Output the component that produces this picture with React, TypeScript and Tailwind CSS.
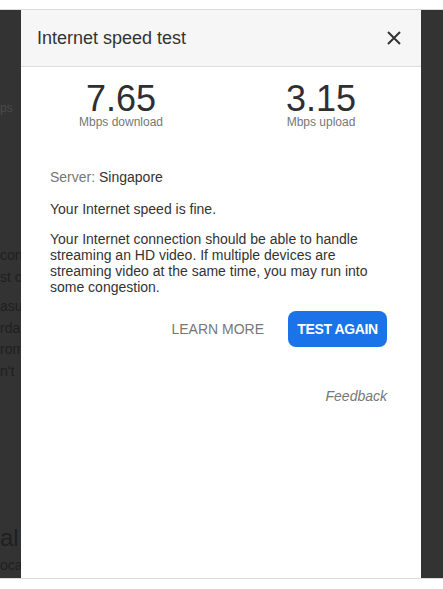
// Internet speed test dialog over a dimmed page.

import React from 'react'

const BG_LINES: { text: string; className: string }[] = [
  { text: 'ps', className: 'mt-[90px] text-[12px] leading-[16px] text-[#4a4a4a]' },
  { text: 'con', className: 'mt-[128px] text-[14px] leading-[22px]' },
  { text: 'st c', className: 'text-[14px] leading-[22px]' },
  { text: 'asu', className: 'mt-[8px] text-[14px] leading-[21.5px]' },
  { text: 'rda', className: 'text-[14px] leading-[21.5px]' },
  { text: 'rom', className: 'text-[14px] leading-[21.5px]' },
  { text: "n't", className: 'text-[14px] leading-[21.5px]' },
  { text: 'al', className: 'mt-[142px] text-[24px] leading-[28px]' },
  { text: 'ocat', className: 'mt-[3px] text-[14px] leading-[20px]' },
]

const Stat: React.FC<{ value: string; label: string }> = ({ value, label }) => (
  <div className="flex flex-col items-center">
    <span className="text-[36px] leading-[34px] text-[#2f2f2f]">{value}</span>
    <span className="text-[12px] leading-none text-[#777]">{label}</span>
  </div>
)

export default function App() {
  return (
    <div className="w-[443px] h-[589px] flex flex-col bg-white font-['Liberation_Sans',Arial,sans-serif]">
      <div className="h-[10px] shrink-0 border-b border-[#dcdcdc]" />

      <div className="flex h-[568px] shrink-0 bg-[#333]">
        {/* page behind the overlay, mostly hidden */}
        <div className="w-[21px] shrink-0 overflow-hidden whitespace-nowrap text-[#1f1f1f] flex flex-col">
          {BG_LINES.map((l, i) => (
            <span key={i} className={l.className}>
              {l.text}
            </span>
          ))}
        </div>

        <div className="w-[400px] shrink-0 bg-white flex flex-col">
          <div className="h-[57px] shrink-0 flex items-center justify-between pl-[16px] pr-[20px] bg-[#f6f6f6] border-b border-[#dcdcdc]">
            <span className="text-[18px] leading-[27px] text-[#333]">Internet speed test</span>
            <button type="button" aria-label="Close" className="w-[14px] h-[14px] flex items-center justify-center">
              <svg width="14" height="14" viewBox="0 0 14 14" fill="none" stroke="#333" strokeWidth="2">
                <path d="M1 1 L13 13 M13 1 L1 13" />
              </svg>
            </button>
          </div>

          <div className="grid grid-cols-2 pt-[15px]">
            <Stat value="7.65" label="Mbps download" />
            <Stat value="3.15" label="Mbps upload" />
          </div>

          <div className="flex flex-col pl-[29px] pr-[34px] pt-[39px] text-[14px] text-[#333]">
            <p className="leading-[20px]">
              <span className="text-[#777]">Server:</span> Singapore
            </p>
            <p className="mt-[12px] leading-[20px]">Your Internet speed is fine.</p>
            <p className="mt-[12px] leading-[16px]">
              Your Internet connection should be able to handle streaming an HD video. If multiple devices are
              streaming video at the same time, you may run into some congestion.
            </p>

            <div className="mt-[16px] flex items-center justify-end gap-[24px]">
              <button type="button" className="text-[14px] text-[#777]">
                LEARN MORE
              </button>
              <button
                type="button"
                className="h-[36px] w-[99px] rounded-lg bg-[#1a73e8] text-[14px] font-bold tracking-[-0.4px] text-white"
              >
                TEST AGAIN
              </button>
            </div>

            <div className="mt-[39px] flex justify-end">
              <span className="leading-[20px] italic text-[#777]">Feedback</span>
            </div>
          </div>
        </div>

        <div className="flex-1" />
      </div>

      <div className="flex-1 border-t border-[#dcdcdc]" />
    </div>
  )
}
